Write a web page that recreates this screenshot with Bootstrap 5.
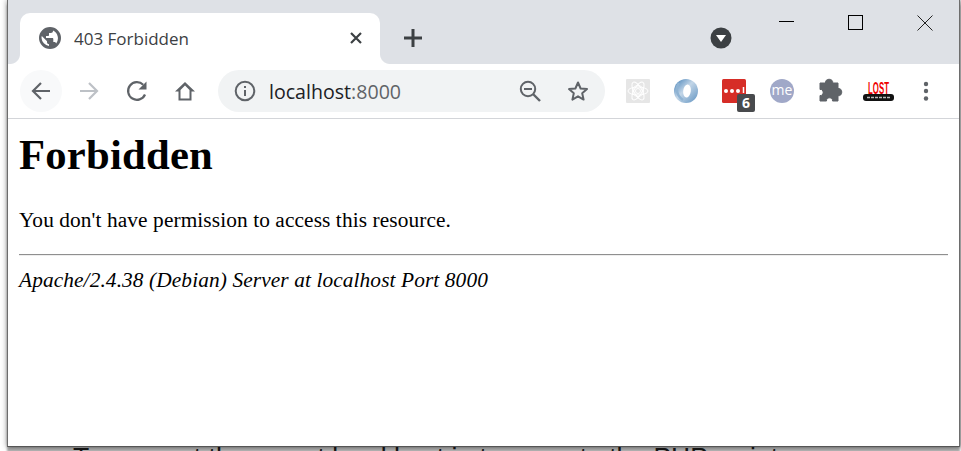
<!DOCTYPE html>
<html lang="en">
<head>
<meta charset="utf-8">
<title>403 Forbidden</title>
<link href="https://cdn.jsdelivr.net/npm/bootstrap@5.3.0/dist/css/bootstrap.min.css" rel="stylesheet">
<script src="https://cdn.jsdelivr.net/npm/bootstrap@5.3.0/dist/js/bootstrap.bundle.min.js"></script>
<style>
html,body{margin:0;height:451px;overflow:hidden;background:#fff}
.desk{height:451px;padding:0 1px 0 7px;overflow:hidden}
.win{height:447px;width:953px;border:1px solid #6d6d6d;border-top:0;border-bottom-color:#555;background:#fff;box-shadow:0 5px 2px rgba(0,0,0,.33),-1px 0 5px rgba(0,0,0,.3),2px 0 3px rgba(0,0,0,.3);flex:none}
.strip{height:64px;background:#dee1e6;padding:13px 0 0 12px;position:relative}
.tabx{width:360px;height:51px;background:#fff;border-radius:10px 10px 0 0;padding:0 0 1px 18px;font:17px "Open Sans","Noto Sans",sans-serif;color:#3c4043;position:relative}
.tabx::before,.tabx::after{content:"";position:absolute;bottom:0;width:10px;height:10px}
.tabx::before{left:-10px;background:radial-gradient(circle at 0 0,#dee1e6 9.500px,#fff 10.500px)}
.tabx::after{right:-10px;background:radial-gradient(circle at 100% 0,#dee1e6 9.500px,#fff 10.500px)}
.tabx .ttl{margin-left:12px;width:275px}
.plusb{margin:11px 0 0 19px}
.dl{position:absolute;left:702px;top:27px}
.wc{position:absolute;top:15px}
.wc-min{left:771px;top:13px}
.wc-max{left:840px}
.wc-cls{left:909px}
.tools{height:55px;border-bottom:1px solid #d3d5d9;padding:6px 0 6px 12px}
.navb{width:42px;height:42px;border-radius:50%;flex:none;margin-right:3px}
.navb.on{background:#f8f9fa}
.navg{width:48px;height:42px;flex:none}
.omni{width:387px;height:42px;border-radius:21px;background:#f1f3f4;margin-left:9px;padding-left:16px;flex:none;font:19.6px "Open Sans","Noto Sans",sans-serif;color:#202124}
.omni .dim{color:#5f6368}
.omni .url{margin-left:13px;width:249px}
.ext{position:absolute;top:0;height:42px}
.e1{left:21px}.e2{left:69px}.e3{left:117px}.e4{left:165px}.e5{left:214px}.e6{left:258px}.e7{left:317px}
.toolext{position:relative;width:348px;height:42px;flex:none}
.bdg{position:absolute;left:737px;top:94px;width:18px;height:18px;border-radius:2px;background:#484a4d;color:#fff;font:bold 14px/18px "Open Sans",sans-serif;text-align:center}
.pagex{font-family:"Liberation Serif","Times New Roman",serif;color:#000;padding:0 11px;font-size:21.33px;line-height:normal}
.pagex h1{font:bold 42.67px "Liberation Serif",serif;margin:11px 0 0;line-height:49px;letter-spacing:.22px}
.pagex p{margin:29px 0 0;line-height:24px;letter-spacing:.1px}
.pagex hr{margin:22px 0 0;height:2px;border:0;border-top:1px solid #8f8f8f;border-bottom:1px solid #eee;opacity:1;background:transparent}
.pagex address{font-style:italic;margin:12px 0 0;line-height:24px;letter-spacing:.11px}
.behind{position:absolute;left:73px;top:441px;font:26.5px/32px "Liberation Sans",Arial,sans-serif;color:#222;white-space:nowrap}
</style>
</head>
<body>
<div class="behind">To connect the secret local host in to execute the PHP script</div>
<div class="desk position-relative">
<div class="win position-relative">
  <div class="strip d-flex align-items-start">
    <div class="tabx d-flex align-items-center">
      <svg width="24" height="24" viewBox="0 0 24 24"><path fill="#5f6368" d="M12 1a11 11 0 1 0 0 22 11 11 0 0 0 0-22zM3.500 12c0-.7.1-1.400.3-2l5.200 5.200v1c0 1.100.9 2 2 2v1.700A8.600 8.600 0 0 1 3.500 12zm14.700 5.400c-.3-.8-1-1.400-1.900-1.400h-1v-3c0-.6-.4-1-1-1H8v-2h2c.6 0 1-.4 1-1V7h2c1.100 0 2-.9 2-2v-.4a8.500 8.500 0 0 1 3.200 12.800z"/></svg>
      <span class="ttl">403 Forbidden</span>
      <svg width="14" height="14" viewBox="0 0 14 14"><path d="M2 2l10 10M12 2L2 12" stroke="#3c4043" stroke-width="2.200"/></svg>
    </div>
    <svg class="plusb" width="28" height="28" viewBox="0 0 28 28"><path d="M14 5v18M5 14h18" stroke="#3c4043" stroke-width="3"/></svg>
    <svg class="dl" width="22" height="22" viewBox="0 0 22 22"><circle cx="11" cy="11" r="10.500" fill="#3c4043"/><path d="M6 8h10l-5 7z" fill="#fff"/></svg>
    <svg class="wc wc-min" width="16" height="16" viewBox="0 0 16 16"><path d="M0 8.500h15" stroke="#000"/></svg>
    <svg class="wc wc-max" width="16" height="16" viewBox="0 0 16 16"><rect x=".5" y=".5" width="14" height="14" fill="none" stroke="#000"/></svg>
    <svg class="wc wc-cls" width="16" height="16" viewBox="0 0 16 16"><path d="M.5.500l15 15M15.500.500l-15 15" stroke="#222"/></svg>
  </div>
  <div class="tools d-flex align-items-center">
    <div class="navb on d-flex align-items-center justify-content-center">
      <svg width="24" height="24" viewBox="0 0 24 24"><path d="M21 12H4M12 4l-8 8 8 8" fill="none" stroke="#5f6368" stroke-width="2.200"/></svg>
    </div>
    <div class="navg d-flex align-items-center justify-content-center" >
      <svg width="24" height="24" viewBox="0 0 24 24"><path d="M3 12h17M12 4l8 8-8 8" fill="none" stroke="#bdc1c6" stroke-width="2.200"/></svg>
    </div>
    <div class="navg d-flex align-items-center justify-content-center">
      <svg width="24" height="24" viewBox="0 0 24 24"><path d="M20 15.500A8.800 8.800 0 1 1 18.200 5.800" fill="none" stroke="#5f6368" stroke-width="2.200"/><path d="M21.500 2.500v8h-8z" fill="#5f6368"/></svg>
    </div>
    <div class="navg d-flex align-items-center justify-content-center">
      <svg width="24" height="24" viewBox="0 0 24 24"><path d="M12 3L2 12.500h3.500v9h13v-9H22zM7.500 19.500v-8.600L12 6.500l4.500 4.400v8.600z" fill="#5f6368" fill-rule="evenodd"/></svg>
    </div>
    <div class="omni d-flex align-items-center">
      <svg width="22" height="22" viewBox="0 0 22 22"><circle cx="11" cy="11" r="9.300" fill="none" stroke="#5f6368" stroke-width="2"/><path d="M10 10h2v6h-2zM10 6h2v2h-2z" fill="#5f6368"/></svg>
      <span class="url">localhost<span class="dim">:8000</span></span>
      <svg width="24" height="24" viewBox="0 0 24 24"><circle cx="10" cy="10" r="7.200" fill="none" stroke="#5f6368" stroke-width="2"/><path d="M15 15l7 7" stroke="#5f6368" stroke-width="2.400"/><path d="M6 10h8" stroke="#5f6368" stroke-width="2"/></svg>
      <svg class="ms-4" width="24" height="24" viewBox="0 0 24 24"><path d="M12 3.500l2.600 6 6.400.6-4.800 4.200 1.400 6.300L12 17.300l-5.600 3.300 1.400-6.300L3 10.100l6.400-.6z" fill="none" stroke="#5f6368" stroke-width="2" stroke-linejoin="round"/></svg>
    </div>
    <div class="toolext">
      <svg class="ext e1" width="24" height="42" viewBox="0 0 24 42"><rect width="24" height="24" y="9" rx="1" fill="#e6e6e6"/><g fill="none" stroke="#fff" stroke-width="1"><circle cx="12" cy="21" r="2.500"/><circle cx="12" cy="21" r="5.500"/><ellipse cx="12" cy="21" rx="10" ry="4"/><ellipse cx="12" cy="21" rx="10" ry="4" transform="rotate(60 12 21)"/><ellipse cx="12" cy="21" rx="10" ry="4" transform="rotate(120 12 21)"/></g></svg>
      <svg class="ext e2" width="24" height="42" viewBox="0 0 24 42"><defs><linearGradient id="jg" x1="0" y1="0" x2="1" y2="1"><stop offset="0" stop-color="#3f7db5"/><stop offset=".45" stop-color="#c3d6e8"/><stop offset="1" stop-color="#5f92c0"/></linearGradient></defs><circle cx="12" cy="21" r="12" fill="url(#jg)"/><path d="M5 13c-4 6-2 13 4 17" fill="none" stroke="#8fb3d3" stroke-width="2.500"/><ellipse cx="13" cy="21" rx="3.800" ry="6.500" fill="#fff" transform="rotate(8 13 21)"/></svg>
      <svg class="ext e3" width="24" height="42" viewBox="0 0 24 42"><rect y="9" width="24" height="24" rx="1.500" fill="#d62d27"/><circle cx="4" cy="21" r="2" fill="#fff"/><circle cx="10" cy="21" r="2" fill="#fff"/><circle cx="16" cy="21" r="2" fill="#fff"/><path d="M21.500 17v6" stroke="#fff" stroke-width="1.500"/></svg>
      <svg class="ext e4" width="24" height="42" viewBox="0 0 24 42"><circle cx="12" cy="21" r="12" fill="#a0a8c8"/><text x="12" y="25" text-anchor="middle" font-family="Open Sans" font-size="14" fill="#fff">me</text></svg>
      <svg class="ext e5" width="24" height="42" viewBox="0 0 24 42"><path d="M1 13h5.500c-.8-5 8-5 7.200 0H19v5.500c5-.8 5 8 0 7.200V31h-5.500c.6-4.200-6.500-4.200-6 0H1v-5.500c4.200.8 4.200-7 0-6z" fill="#5f6368" stroke="#5f6368" stroke-linejoin="round"/></svg>
      <svg class="ext e6" width="32" height="42" viewBox="0 0 32 42"><rect x="0" y="24" width="31" height="7" rx="3" fill="#111"/><path d="M4 27.500h23" stroke="#bbb" stroke-width="1.500" stroke-dasharray="3 1"/><text transform="translate(15.5 24) scale(1 2)" text-anchor="middle" font-family="Liberation Sans" font-weight="bold" font-size="7.800" fill="#f00000">LOST</text></svg>
      <svg class="ext e7" width="8" height="42" viewBox="0 0 8 42"><circle cx="4" cy="14" r="2.200" fill="#5f6368"/><circle cx="4" cy="21" r="2.200" fill="#5f6368"/><circle cx="4" cy="28.500" r="2.200" fill="#5f6368"/></svg>
    </div>
  </div>
  <div class="pagex">
    <h1>Forbidden</h1>
    <p>You don't have permission to access this resource.</p>
    <hr>
    <address>Apache/2.4.38 (Debian) Server at localhost Port 8000</address>
  </div>
</div>
<div class="bdg">6</div>
</div>
</body>
</html>
